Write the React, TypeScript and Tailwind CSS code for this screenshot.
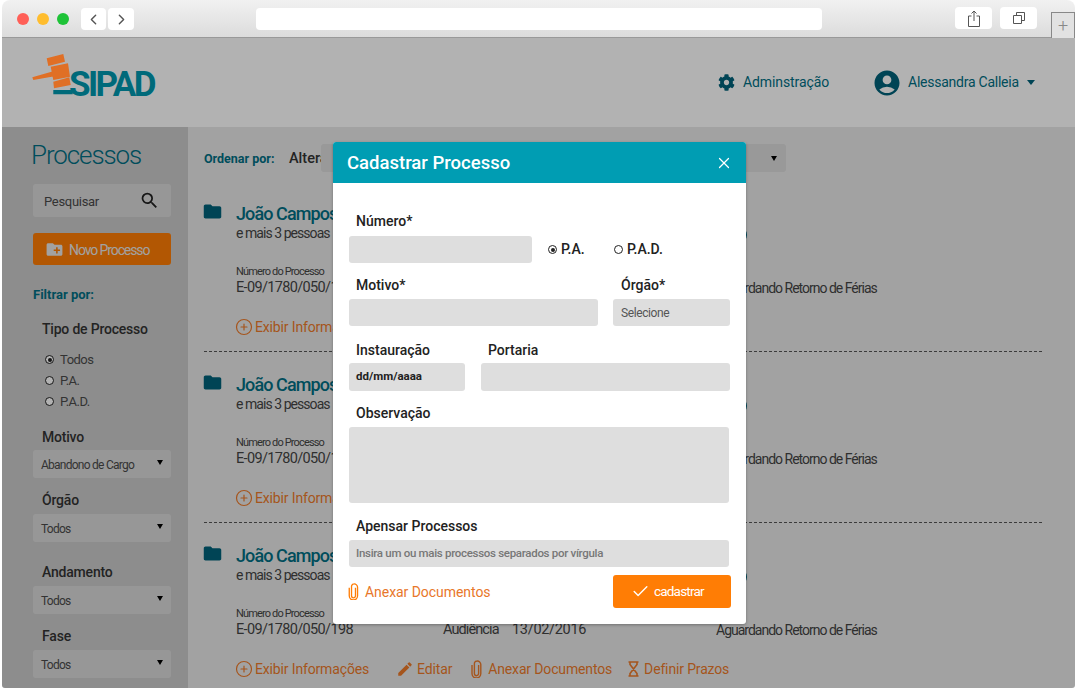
import { Check, ChevronLeft, ChevronRight, CirclePlus, X } from "lucide-react";
import { FaCog } from "react-icons/fa";
import {
  MdAccountCircle,
  MdCreateNewFolder,
  MdEdit,
  MdFolder,
  MdSearch,
} from "react-icons/md";

const font = { fontFamily: "Roboto, 'Noto Sans', sans-serif" };

function Clip({ className }: { className?: string }) {
  return (
    <svg viewBox="0 0 11 18" className={className} fill="none" stroke="currentColor" strokeWidth="1.4">
      <path d="M7.6 5v8.6a2.1 2.1 0 0 1-4.2 0V3.6a2.6 2.6 0 0 1 2.6-2.6h0a3.6 3.6 0 0 1 3.8 3.6v9a4.4 4.4 0 0 1-8.8 0V5" />
    </svg>
  );
}

function Hourglass({ className }: { className?: string }) {
  return (
    <svg viewBox="0 0 11 16" className={className} fill="none" stroke="currentColor" strokeWidth="1.6">
      <path d="M0.5 1h10M0.5 15h10M2 1v2.5L9 12.500V15M9 1v2.5L2 12.500V15" />
    </svg>
  );
}

function Radio({ on }: { on?: boolean }) {
  return (
    <span className="flex h-[9px] w-[9px] shrink-0 items-center justify-center rounded-full border-[1.5px] border-[#222] bg-white">
      {on && <span className="h-[4px] w-[4px] rounded-full bg-[#222]" />}
    </span>
  );
}

function Caret({ className }: { className: string }) {
  return <span className={`h-0 w-0 border-x-[3.5px] border-t-[5px] border-x-transparent ${className}`} />;
}

function SideSelect({ value }: { value: string }) {
  return (
    <div className="flex h-[28px] items-center justify-between rounded-[3px] bg-[#d9d9d9] pl-[8px] pr-[8px] text-[12px] tracking-[-0.75px] text-[#4a4a4a]">
      <span className="mt-[2px]">{value}</span>
      <Caret className="mb-[3px] border-t-black" />
    </div>
  );
}

function SideLabel({ children, className }: { children: string; className?: string }) {
  return (
    <div className={`h-[20px] text-[14px] font-medium leading-[20px] tracking-[-0.2px] text-[#333] ${className ?? ""}`}>{children}</div>
  );
}

function ProcessItem({ last }: { last?: boolean }) {
  return (
    <div className="flex flex-col">
      <div className="relative">
        <MdFolder className="absolute left-[-2px] top-[-1px] text-[21px] text-[#00627a]" />
        <div className="absolute left-[525px] top-[24px] h-[18px] w-[18px] rounded-full bg-[#00627a]" />
      </div>
      <div className="pl-[32px]">
        <div className="h-[22px] text-[18px] font-medium leading-[24px] tracking-[-0.9px] text-[#006f84]">João Campos</div>
        <div className="h-[16px] text-[14px] leading-[18px] tracking-[-0.95px] text-[#444]">e mais 3 pessoas</div>
        <div className="mt-[24px] h-[14px] text-[11px] leading-[16px] tracking-[-0.85px] text-[#444]">Número do Processo</div>
        <div className="mt-[1px] flex h-[18px] text-[14.5px] leading-[18px] text-[#444]">
          <span className="w-[207px] tracking-[-0.65px]">E-09/1780/050/198</span>
          <span className="w-[69px] tracking-[-0.9px]">Audiência</span>
          <span className="w-[204px] tracking-[-0.3px]">13/02/2016</span>
          <span className="text-[14px] tracking-[-1px]">Aguardando Retorno de Férias</span>
        </div>
        <div className="ml-[-1px] mt-[20px] flex h-[20px] items-center text-[14px] tracking-[-0.15px] text-[#ec7a2a]">
          <CirclePlus size={18} strokeWidth={1.6} />
          <span className="ml-[2px]">Exibir Informações</span>
          <MdEdit className="ml-[27px] text-[18px]" />
          <span className="ml-[3px]">Editar</span>
          <Clip className="ml-[19px] h-[18px] w-[11px]" />
          <span className="ml-[6px]">Anexar Documentos</span>
          <Hourglass className="ml-[16px] h-[16px] w-[11px]" />
          <span className="ml-[5px]">Definir Prazos</span>
        </div>
      </div>
      {!last && <div className="mb-[21px] mt-[14px] border-t border-dashed border-[#555]" />}
    </div>
  );
}

function ModalLabel({ children, className }: { children: string; className?: string }) {
  return (
    <div className={`h-[20px] pl-[7px] text-[14px] font-medium leading-[20px] text-[#222] ${className ?? ""}`}>{children}</div>
  );
}

export default function App() {
  return (
    <div className="h-[690px] w-[1078px] overflow-hidden bg-white" style={font}>
      <div className="ml-[2px] flex h-[688px] w-[1073px] flex-col overflow-hidden rounded-t-[8px] rounded-b-[3px]">
        {/* Browser bar */}
        <div className="flex h-[38px] shrink-0 items-start border-b border-[#999] bg-gradient-to-b from-[#f1f1f1] to-[#dcdcdc]">
          <div className="ml-[15px] mt-[13px] flex gap-[8px]">
            <span className="h-[12px] w-[12px] rounded-full bg-[#ff5f57]" />
            <span className="h-[12px] w-[12px] rounded-full bg-[#ffbd2e]" />
            <span className="h-[12px] w-[12px] rounded-full bg-[#1ec337]" />
          </div>
          <div className="ml-[12px] mt-[8px] flex gap-[2px]">
            <div className="flex h-[22px] w-[25px] items-center justify-center rounded-[4px] bg-white text-[#555]">
              <ChevronLeft size={17} />
            </div>
            <div className="flex h-[22px] w-[26px] items-center justify-center rounded-[4px] bg-white text-[#555]">
              <ChevronRight size={17} />
            </div>
          </div>
          <div className="ml-[122px] mt-[8px] h-[22px] w-[566px] rounded-[4px] bg-white" />
          <div className="ml-[133px] mt-[7px] flex h-[22px] w-[37px] items-center justify-center rounded-[4px] bg-white text-[#555]">
            <svg viewBox="0 0 12 17" className="h-[17px] w-[12px]" fill="none" stroke="currentColor" strokeWidth="1">
              <path d="M3.5 6H.5v10.500h11V6h-3M6 11V1M3.5 3.500L6 1l2.500 2.500" />
            </svg>
          </div>
          <div className="ml-[8px] mt-[7px] flex h-[22px] w-[37px] items-center justify-center rounded-[4px] bg-white text-[#555]">
            <svg viewBox="0 0 12 12" className="h-[12px] w-[12px]" fill="none" stroke="currentColor" strokeWidth="1">
              <path d="M.5 3.500h8v8h-8zM3.500 3.500v-3h8v8h-3" />
            </svg>
          </div>
          <div className="ml-[14px] mt-[12px] flex h-[26px] w-[24px] items-center justify-center border border-b-0 border-[#888] bg-[#e2e2e2] text-[18px] font-light text-[#888]">
            +
          </div>
        </div>

        <div className="relative flex min-h-0 flex-1 flex-col bg-white">
          {/* Header */}
          <div className="flex h-[89px] shrink-0 items-center">
            <div className="relative z-10 ml-[30px] mt-[-15px] h-[42px] w-[123px]">
              <svg viewBox="0 0 56 42" className="absolute left-0 top-0 h-[42px] w-[56px]">
                <path d="M14.700 4.300L31.300 0l1.700 7.700L16.300 12z M18.700 12.700L36 9.300l2 13.400L21.300 26z M.3 23.300L23 16.700l1 5.300L1.300 26z M21.300 27.700l16-4.400 1.400 7.700L22 34.300z" fill="#e06f25" />
                <path d="M21.300 36h19.400v4.300H21.300z" fill="#006a7a" />
              </svg>
              <span className="absolute bottom-[-6px] left-[37px] text-[35px] font-bold leading-[35px] tracking-[-2.6px] text-[#006a7a]">
                SIPAD
              </span>
            </div>
            <div className="ml-[563px] flex items-center text-[14px] tracking-[-0.1px] text-[#006f84]">
              <FaCog className="text-[17px] text-[#00627a]" />
              <span className="ml-[8px]">Adminstração</span>
            </div>
            <div className="ml-[43px] flex items-center text-[14px] tracking-[-0.25px] text-[#006f84]">
              <MdAccountCircle className="text-[30px] text-[#00627a]" />
              <span className="ml-[6px]">Alessandra Calleia</span>
              <span className="ml-[8px] h-0 w-0 border-x-[4.5px] border-t-[5px] border-x-transparent border-t-[#00627a]" />
            </div>
          </div>

          <div className="flex min-h-0 flex-1">
            {/* Sidebar */}
            <aside className="w-[186px] shrink-0 bg-[#cbcbcb] pl-[31px] pr-[17px] pt-[12px]">
              <div className="ml-[-2px] h-[32px] text-[26px] font-light leading-[32px] tracking-[-1.1px] text-[#006f84]">Processos</div>
              <div className="mt-[13px] flex h-[33px] items-center justify-between rounded-[3px] bg-[#d9d9d9] pl-[11px] pr-[11px] text-[13px] tracking-[-0.3px] text-[#4a4a4a]">
                <span className="mt-[3px]">Pesquisar</span>
                <MdSearch className="text-[21px] text-[#222]" />
              </div>
              <div className="mt-[16px] flex h-[32px] items-center rounded-[3px] bg-[#ff7d05] pl-[12px] text-[14px] tracking-[-1.1px] text-[#e8e8e8]">
                <MdCreateNewFolder className="text-[19px]" />
                <span className="ml-[5px] mt-[3px]">Novo Processo</span>
              </div>
              <div className="mt-[22px] h-[16px] text-[13px] font-bold leading-[16px] text-[#006f84]">Filtrar por:</div>
              <SideLabel className="ml-[9px] mt-[16px]">Tipo de Processo</SideLabel>
              <div className="ml-[12px] mt-[10px] flex flex-col text-[13px] tracking-[-0.5px] text-[#4a4a4a]">
                <div className="flex h-[21px] items-center gap-[6px]"><Radio on />Todos</div>
                <div className="flex h-[21px] items-center gap-[6px]"><Radio />P.A.</div>
                <div className="flex h-[21px] items-center gap-[6px]"><Radio />P.A.D.</div>
              </div>
              <SideLabel className="ml-[9px] mt-[15px]">Motivo</SideLabel>
              <div className="mt-[3px]"><SideSelect value="Abandono de Cargo" /></div>
              <SideLabel className="ml-[9px] mt-[12px]">Órgão</SideLabel>
              <div className="mt-[4px]"><SideSelect value="Todos" /></div>
              <SideLabel className="ml-[9px] mt-[20px]">Andamento</SideLabel>
              <div className="mt-[4px]"><SideSelect value="Todos" /></div>
              <SideLabel className="ml-[9px] mt-[12px]">Fase</SideLabel>
              <div className="mt-[4px]"><SideSelect value="Todos" /></div>
            </aside>

            {/* Main list */}
            <main className="min-w-0 flex-1 bg-[#e9e9e9] pl-[16px] pr-[33px] pt-[17px]">
              <div className="mb-[30px] flex h-[28px] items-center">
                <span className="mt-[2px] w-[85px] text-[12.5px] font-bold text-[#006f84]">Ordenar por:</span>
                <span className="mt-[2px] text-[14.5px] font-medium text-[#333]">Alteração</span>
                <div className="ml-[-30px] flex h-[28px] w-[465px] items-center justify-end rounded-[3px] bg-[#dbdbdb] pr-[9px]">
                  <Caret className="border-t-black" />
                </div>
              </div>
              <ProcessItem />
              <ProcessItem />
              <ProcessItem last />
            </main>
          </div>

          {/* Dim layer */}
          <div className="absolute inset-0 bg-black/30" />

          {/* Modal */}
          <div className="absolute left-[331px] top-[104px] z-20 w-[413px] overflow-hidden rounded-[3px] bg-white shadow-[0_1px_3px_rgba(0,0,0,0.3)]">
            <div className="flex h-[41px] items-center justify-between bg-[#009db3] pl-[14px] pr-[13px] text-white">
              <span className="mt-[2px] text-[18.5px] font-medium">Cadastrar Processo</span>
              <X size={18} strokeWidth={1.6} />
            </div>
            <div className="px-[16px] pb-[16px]">
              <ModalLabel className="mt-[28px]">Número*</ModalLabel>
              <div className="mt-[5px] flex h-[27px] items-center">
                <div className="h-[27px] w-[183px] rounded-[3px] bg-[#dedede]" />
                <div className="ml-[16px] flex w-[66px] items-center gap-[4px] text-[14px] font-medium text-[#222]"><Radio on />P.A.</div>
                <div className="flex items-center gap-[4px] text-[14px] font-medium text-[#222]"><Radio />P.A.D.</div>
              </div>
              <div className="mt-[12px] flex gap-[15px]">
                <div className="w-[249px]">
                  <ModalLabel>Motivo*</ModalLabel>
                  <div className="mt-[4px] h-[27px] rounded-[3px] bg-[#dedede]" />
                </div>
                <div className="w-[117px]">
                  <ModalLabel className="ml-[1px]">Órgão*</ModalLabel>
                  <div className="mt-[4px] flex h-[27px] items-center rounded-[3px] bg-[#dedede] pl-[8px] text-[12px] tracking-[-0.4px] text-[#555]">Selecione</div>
                </div>
              </div>
              <div className="mt-[14px] flex gap-[16px]">
                <div className="w-[116px]">
                  <ModalLabel>Instauração</ModalLabel>
                  <div className="mt-[3px] flex h-[28px] items-center rounded-[3px] bg-[#dedede] pl-[7px] text-[11.5px] font-bold text-[#222]">dd/mm/aaaa</div>
                </div>
                <div className="w-[249px]">
                  <ModalLabel>Portaria</ModalLabel>
                  <div className="mt-[3px] h-[28px] rounded-[3px] bg-[#dedede]" />
                </div>
              </div>
              <ModalLabel className="mt-[12px]">Observação</ModalLabel>
              <div className="mt-[4px] h-[76px] w-[380px] rounded-[3px] bg-[#dedede]" />
              <ModalLabel className="mt-[13px]">Apensar Processos</ModalLabel>
              <div className="mt-[4px] flex h-[27px] w-[380px] items-center rounded-[3px] bg-[#dedede] pl-[7px] text-[11.5px] font-medium tracking-[-0.3px] text-[#777]">
                Insira um ou mais processos separados por vírgula
              </div>
              <div className="mr-[-1px] mt-[8px] flex h-[33px] items-center justify-between">
                <div className="ml-[-1px] flex items-center text-[14px] tracking-[-0.05px] text-[#e8772a]">
                  <Clip className="h-[17px] w-[11px] text-[#ff7d05]" />
                  <span className="ml-[6px] mt-[1px]">Anexar Documentos</span>
                </div>
                <div className="flex h-[33px] w-[118px] items-center rounded-[3px] bg-[#ff7d05] pl-[18px] text-[13.5px] tracking-[-0.8px] text-white">
                  <Check size={19} strokeWidth={1.8} />
                  <span className="ml-[4px]">cadastrar</span>
                </div>
              </div>
            </div>
          </div>
        </div>
      </div>
    </div>
  );
}
